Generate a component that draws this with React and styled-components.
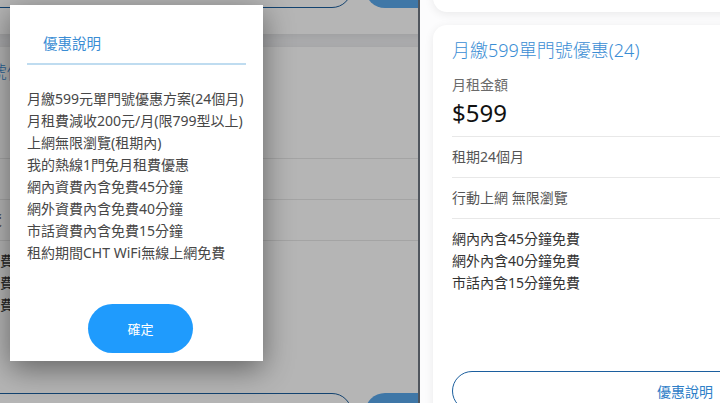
import React from "react";
import styled, { createGlobalStyle } from "styled-components";

const GlobalStyle = createGlobalStyle`
  html, body {
    margin: 0;
    padding: 0;
  }
  body {
    font-family: "Noto Sans", "Noto Sans CJK TC", sans-serif;
    background: #fff;
  }
  * {
    box-sizing: border-box;
  }
`;

const plan = {
  title: "月繳599單門號優惠(24)",
  priceLabel: "月租金額",
  price: "$599",
  rows: ["租期24個月", "行動上網 無限瀏覽"],
  minutes: ["網內內含45分鐘免費", "網外內含40分鐘免費", "市話內含15分鐘免費"],
};

const notes = [
  "月繳599元單門號優惠方案(24個月)",
  "月租費減收200元/月(限799型以上)",
  "上網無限瀏覽(租期內)",
  "我的熱線1門免月租費優惠",
  "網內資費內含免費45分鐘",
  "網外資費內含免費40分鐘",
  "市話資費內含免費15分鐘",
  "租約期間CHT WiFi無線上網免費",
];

function PlanCard() {
  return (
    <Card>
      <Title>{plan.title}</Title>
      <PriceLabel>{plan.priceLabel}</PriceLabel>
      <Price>{plan.price}</Price>
      {plan.rows.map((row) => (
        <Row key={row}>{row}</Row>
      ))}
      <Minutes>
        {plan.minutes.map((m) => (
          <li key={m}>{m}</li>
        ))}
      </Minutes>
      <ButtonRow>
        <OutlineButton>優惠說明</OutlineButton>
        <FilledButton>立即申辦</FilledButton>
      </ButtonRow>
    </Card>
  );
}

export default function App() {
  return (
    <>
      <GlobalStyle />
      <Screen>
        <LeftPane>
          {/* page behind the dialog, scrolled sideways */}
          <CardList $x={-133} $y={-378}>
            <PlanCard />
            <PlanCard />
          </CardList>
          <Overlay />
          <Modal>
            <ModalHeader>優惠說明</ModalHeader>
            <ModalBody>
              {notes.map((n) => (
                <li key={n}>{n}</li>
              ))}
            </ModalBody>
            <ModalFooter>
              <ConfirmButton>確定</ConfirmButton>
            </ModalFooter>
          </Modal>
        </LeftPane>
        <RightPane>
          <CardList $x={13} $y={-400}>
            <PlanCard />
            <PlanCard />
          </CardList>
        </RightPane>
      </Screen>
    </>
  );
}

const Screen = styled.div`
  display: flex;
  width: 720px;
  height: 403px;
  overflow: hidden;
`;

const LeftPane = styled.div`
  position: relative;
  flex: none;
  width: 420px;
  height: 100%;
  overflow: hidden;
  background: #f1f2f4;
  border-right: 2px solid #50565e;
`;

const RightPane = styled.div`
  flex: 1;
  height: 100%;
  overflow: hidden;
  background: #fcfcfd;
`;

const CardList = styled.div`
  display: flex;
  flex-direction: column;
  gap: 13px;
  width: max-content;
  margin-left: ${(p) => p.$x}px;
  margin-top: ${(p) => p.$y}px;
`;

const Card = styled.div`
  display: flex;
  flex-direction: column;
  width: 657px;
  height: 412px;
  padding: 13px 19px 26px;
  background: #fff;
  border-radius: 14px;
  box-shadow: 0 2px 10px rgba(0, 0, 0, 0.08);
`;

const Title = styled.div`
  font-size: 18px;
  line-height: 24px;
  font-weight: 300;
  color: #3a8dd4;
`;

const PriceLabel = styled.div`
  margin-top: 13px;
  font-size: 14px;
  line-height: 20px;
  color: #6a6a6a;
`;

const Price = styled.div`
  margin-top: 2px;
  margin-bottom: 7px;
  font-size: 24px;
  line-height: 32px;
  font-weight: 400;
  color: #111;
`;

const Row = styled.div`
  padding: 10px 0;
  border-top: 1px solid #e8e8e8;
  font-size: 14px;
  line-height: 20px;
  color: #555;
`;

const Minutes = styled.ul`
  margin: 0;
  padding: 9px 0 0;
  list-style: none;
  border-top: 1px solid #e8e8e8;
  font-size: 14px;
  line-height: 22px;
  color: #333;
`;

const ButtonRow = styled.div`
  display: flex;
  gap: 13px;
  margin-top: auto;
`;

const OutlineButton = styled.button`
  width: 466px;
  height: 40px;
  border: 1.5px solid #1c5f9e;
  border-radius: 20px;
  background: #fff;
  color: #2f80c8;
  font-family: inherit;
  font-size: 14px;
`;

const FilledButton = styled.button`
  width: 140px;
  height: 40px;
  border: none;
  border-radius: 20px;
  background: #5aa8ec;
  color: #fff;
  font-family: inherit;
  font-size: 14px;
`;

const Overlay = styled.div`
  position: absolute;
  inset: 0;
  background: rgba(0, 0, 0, 0.29);
`;

const Modal = styled.div`
  position: absolute;
  left: 10px;
  top: 5px;
  width: 253px;
  height: 356px;
  display: flex;
  flex-direction: column;
  padding: 0 17px;
  background: #fff;
  box-shadow: 0 8px 28px rgba(0, 0, 0, 0.45);
`;

const ModalHeader = styled.div`
  padding: 28px 16px 10px;
  border-bottom: 2px solid #bfdcf0;
  font-size: 14.5px;
  line-height: 20px;
  color: #3a8dd4;
`;

const ModalBody = styled.ul`
  margin: 0;
  padding: 23px 0 0;
  list-style: none;
  font-size: 14px;
  line-height: 22px;
  color: #474747;
  white-space: nowrap;
`;

const ModalFooter = styled.div`
  display: flex;
  justify-content: center;
  margin-top: auto;
  padding: 0 0 8px 8px;
`;

const ConfirmButton = styled.button`
  width: 105px;
  height: 49px;
  border: none;
  border-radius: 25px;
  background: #1f9bfd;
  color: #fff;
  font-family: inherit;
  font-size: 13px;
`;
